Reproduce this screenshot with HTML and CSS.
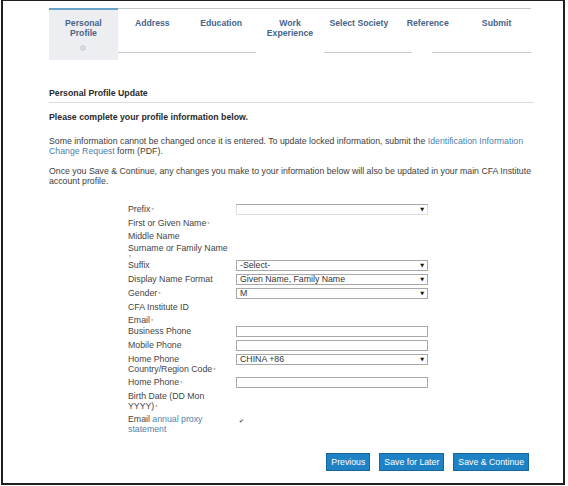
FILE: index.html
```html
<!DOCTYPE html>
<html lang="en">
<head>
<meta charset="utf-8">
<title>Personal Profile Update</title>
<link rel="stylesheet" href="styles.css">
</head>
<body>
<div class="frame">
  <div class="page">
    <nav class="tabs">
      <div class="tab active">Personal<br>Profile
        <svg class="tab-icon" width="6" height="6" viewBox="0 0 6 6"><circle cx="3" cy="3" r="2.2" fill="none" stroke="#b5bcc6" stroke-width="0.9"/><circle cx="3" cy="3" r="0.8" fill="#c5ccd6"/></svg>
      </div>
      <div class="tab under">Address</div>
      <div class="tab under">Education</div>
      <div class="tab">Work<br>Experience</div>
      <div class="tab under">Select Society</div>
      <div class="tab under-split">Reference</div>
      <div class="tab under">Submit</div>
    </nav>

    <h2 class="section-title">Personal Profile Update</h2>
    <p class="lead">Please complete your profile information below.</p>
    <p class="note">Some information cannot be changed once it is entered. To update locked information, submit the <a class="link" href="#">Identification Information</a><br><a class="link" href="#">Change Request</a> form (PDF).</p>
    <p class="note">Once you Save &amp; Continue, any changes you make to your information below will also be updated in your main CFA Institute<br>account profile.</p>

    <div class="form">
      <div class="row">
        <div class="lbl">Prefix<span class="req">*</span></div>
        <div class="select faint"><span class="val"></span><span class="arrow">▼</span></div>
      </div>
      <div class="row"><div class="lbl">First or Given Name<span class="req">*</span></div></div>
      <div class="row"><div class="lbl">Middle Name</div></div>
      <div class="row tight"><div class="lbl wrap-tight">Surname or Family Name<br><span class="req">*</span></div></div>
      <div class="row">
        <div class="lbl">Suffix</div>
        <div class="select"><span class="val">-Select-</span><span class="arrow">▼</span></div>
      </div>
      <div class="row">
        <div class="lbl">Display Name Format</div>
        <div class="select"><span class="val">Given Name, Family Name</span><span class="arrow">▼</span></div>
      </div>
      <div class="row">
        <div class="lbl">Gender<span class="req">*</span></div>
        <div class="select"><span class="val">M</span><span class="arrow">▼</span></div>
      </div>
      <div class="row"><div class="lbl">CFA Institute ID</div></div>
      <div class="row snug"><div class="lbl">Email<span class="req">*</span></div></div>
      <div class="row">
        <div class="lbl">Business Phone</div>
        <div class="input"></div>
      </div>
      <div class="row">
        <div class="lbl">Mobile Phone</div>
        <div class="input"></div>
      </div>
      <div class="row">
        <div class="lbl">Home Phone<br>Country/Region Code<span class="req">*</span></div>
        <div class="select"><span class="val">CHINA +86</span><span class="arrow">▼</span></div>
      </div>
      <div class="row">
        <div class="lbl">Home Phone<span class="req">*</span></div>
        <div class="input"></div>
      </div>
      <div class="row"><div class="lbl">Birth Date (DD Mon<br>YYYY)<span class="req">*</span></div></div>
      <div class="row">
        <div class="lbl">Email <a class="link" href="#">annual proxy<br>statement</a></div>
        <div class="check">✔</div>
      </div>
    </div>

    <div class="actions">
      <button class="btn" type="button">Previous</button>
      <button class="btn" type="button">Save for Later</button>
      <button class="btn" type="button">Save &amp; Continue</button>
    </div>
  </div>
</div>
</body>
</html>
```

FILE: styles.css
```css
html, body {
  margin: 0;
  padding: 0;
  background: #ffffff;
}

body {
  font-family: "Liberation Sans", Arial, sans-serif;
  font-size: 8.75px;
  line-height: 10px;
  color: #3a3a3a;
}

.frame {
  box-sizing: border-box;
  width: 564px;
  height: 485px;
  margin-left: 1px;
  border: 2px solid #1f1f1f;
  border-top-width: 1px;
}

.page {
  width: 485px;
  padding: 7px 0 0 46px;
}

/* Tabs */
.tabs {
  display: flex;
  align-items: flex-start;
  width: 482px;
}

.tab {
  box-sizing: border-box;
  flex: 1 1 0;
  height: 45px;
  padding-top: 9px;
  border-top: 1px solid #c2c6cc;
  text-align: center;
  font-size: 8.7px;
  font-weight: bold;
  color: #46638a;
}

.tab.under {
  border-bottom: 1px solid #c8ccd2;
}

.tab.under-split {
  background:
    linear-gradient(#c8ccd2, #c8ccd2) no-repeat left bottom / 19px 1px,
    linear-gradient(#c8ccd2, #c8ccd2) no-repeat right bottom / 30px 1px;
}

.tab.active {
  height: 52px;
  padding-top: 8px;
  border-top: 2px solid #6aa3c8;
  background: #eceef2;
  color: #4a6589;
}

.tab-icon {
  display: block;
  margin: 7px auto 0;
}

/* Text content */
.section-title {
  margin: 28px 0 0;
  padding-bottom: 4px;
  border-bottom: 1px solid #dcdcdc;
  font-size: 8.75px;
  line-height: 10px;
  font-weight: bold;
  color: #2a2a2a;
}

.lead {
  margin: 9px 0 0;
  font-weight: bold;
  color: #2a2a2a;
}

.note {
  margin: 14px 0 0;
  white-space: nowrap;
  color: #3d3d3d;
}

.note + .note {
  margin-top: 10px;
}

.link {
  color: #4f7fae;
  text-decoration: none;
}

/* Form */
.form {
  display: flex;
  flex-direction: column;
  gap: 3px;
  margin: 18px 0 0 79px;
}

.row {
  display: flex;
  align-items: flex-start;
}

.row.tight {
  margin-bottom: -3px;
}

.row.snug {
  margin-bottom: -2px;
}

.lbl {
  width: 108px;
  flex: none;
  color: #444444;
}

.lbl.wrap-tight {
  line-height: 8px;
}

.req {
  font-size: 6px;
  line-height: 0;
  color: #8a8a8a;
  margin-left: 1px;
}

.select,
.input {
  box-sizing: border-box;
  width: 192px;
  height: 11px;
  border: 1px solid #a8a8a8;
  background: #ffffff;
}

.select {
  display: flex;
  align-items: center;
  justify-content: space-between;
  padding: 0 3px;
  color: #333333;
  line-height: 9px;
}

.select.faint {
  border-color: #dedede;
  border-top-color: #a8a8a8;
}

.arrow {
  font-family: "DejaVu Sans", sans-serif;
  font-size: 5px;
  color: #111111;
}

.check {
  margin: 3px 0 0 3px;
  font-family: "DejaVu Sans", sans-serif;
  font-size: 6px;
  line-height: 7px;
  color: #555555;
}

/* Buttons */
.actions {
  display: flex;
  justify-content: flex-end;
  gap: 9px;
  margin-top: 19px;
  padding-right: 5px;
}

.btn {
  box-sizing: border-box;
  height: 18px;
  padding: 0 4px;
  border: 1px solid #15679e;
  background: #1f82c4;
  color: #ffffff;
  font-family: "Liberation Sans", Arial, sans-serif;
  font-size: 8.75px;
  line-height: 16px;
  cursor: pointer;
}
```
